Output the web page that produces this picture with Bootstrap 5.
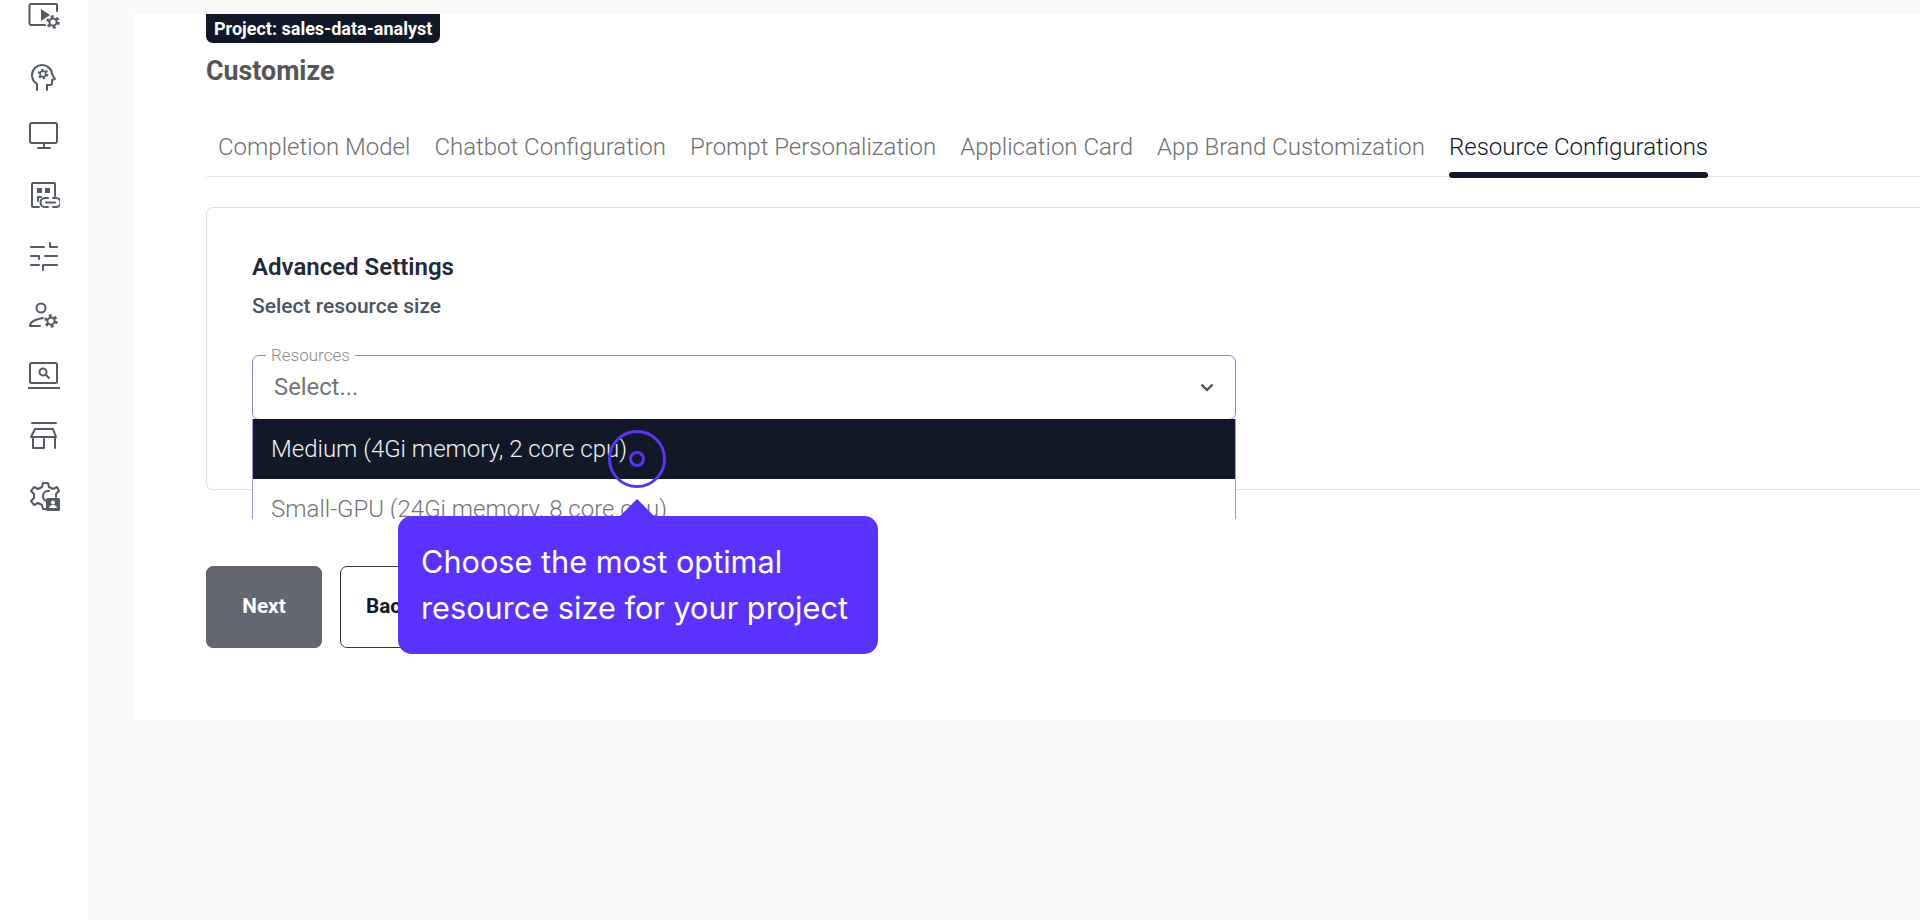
<!DOCTYPE html>
<html lang="en">

<head>
    <meta charset="UTF-8">
    <meta name="viewport" content="width=device-width, initial-scale=1.0">
    <title>Customize | Resource Configurations</title>
    <link href="https://cdn.jsdelivr.net/npm/bootstrap@5.3.0/dist/css/bootstrap.min.css" rel="stylesheet">
    <style>
        html, body { height: 100%; }
        body { background: #f9f9f9; font-family: Roboto, "Liberation Sans", sans-serif; overflow: hidden; }
        .side-rail { width: 88px; height: 920px; background: #fff; gap: 28px; }
        .side-rail svg { width: 32px; height: 32px; fill: none; stroke: #555a64; stroke-width: 2; stroke-linecap: round; stroke-linejoin: round; }
        .side-rail .solid { fill: #555a64; stroke: none; }
        .side-rail .cut { fill: #fff; stroke: none; }
        .main-area { padding: 14px 0 0 46px; }
        .main-panel { height: 706px; background: #fff; padding-left: 72px; }
        .project-tag { background: #111827; color: #fff; font-size: 18px; font-weight: 700; line-height: 29px; height: 29px; padding: 0 8px; border-radius: 0 0 7px 7px; width: 234px; white-space: nowrap; }
        .page-title { color: #555; font-size: 26.800px; font-weight: 700; line-height: 32px; margin: 12px 0 0; }
        .tab-row { margin-top: 44px; height: 46px; border-bottom: 1px solid #e5e7eb; gap: 24px; padding-left: 12px; }
        .tab-item { color: #707070; font-size: 24px; font-weight: 300; line-height: 32px; height: 46px; white-space: nowrap; position: relative; }
        .tab-item.is-on { color: #111827; }
        .tab-item.is-on::after { content: ""; position: absolute; left: 0; right: 0; bottom: -1px; height: 6px; background: #111827; border-radius: 3px; }
        .settings-box { margin-top: 30px; height: 283px; border: 1px solid #e0e0e0; border-right: 0; border-radius: 7px 0 0 7px; padding: 44px 0 0 45px; }
        .settings-title { color: #1f2937; font-size: 24px; font-weight: 600; line-height: 30px; margin: 0; }
        .settings-sub { color: #4b5563; font-size: 21px; font-weight: 500; line-height: 26px; margin: 11px 0 0; }
        .select-wrap { width: 984px; margin-top: 36px; position: relative; }
        .select-box { height: 65px; border: 1px solid #8f7fd6; border-radius: 7px; padding: 0 21px; color: #757575; font-size: 23.800px; }
        .select-label { position: absolute; left: 14px; top: -9px; background: #fff; padding: 0 5px; color: #8a8a8a; font-size: 17px; font-weight: 300; line-height: 18px; }
        .select-menu { position: absolute; top: 64px; left: 0; right: 0; height: 100px; overflow: hidden; background: #fff; border: 1px solid #a99be0; border-width: 0 1px; }
        .select-opt { height: 60px; padding: 0 18px; font-size: 24px; font-weight: 300; color: #757575; white-space: nowrap; }
        .select-opt.is-on { background: #111827; color: #f2f2f2; margin: 0 -1px; padding-left: 19px; }
        .act-btn { height: 82px; font-size: 20.700px; font-weight: 700; border-radius: 7px; }
        .btn-next { width: 116px; background: #646672; border: 1px solid #646672; color: #fff; }
        .btn-back { width: 98px; background: #fff; border: 1px solid #333a45; color: #111827; }
        .act-row { margin-top: 76px; gap: 18px; }
        .pulse-ring { position: absolute; left: 608px; top: 430px; width: 58px; height: 58px; border: 3px solid #5b34f5; border-radius: 50%; }
        .pulse-dot { position: absolute; left: 629px; top: 451px; width: 16px; height: 16px; border: 3px solid #5b34f5; border-radius: 50%; }
        .guide-tip { position: absolute; left: 398px; top: 516px; width: 480px; height: 138px; background: #5b31ff; border-radius: 14px; color: #fff; font-family: Inter, sans-serif; font-size: 30.700px; line-height: 46px; padding: 23px 0 0 23px; }
        .guide-tip::before { content: ""; position: absolute; left: 222px; top: -17px; border-left: 17px solid transparent; border-right: 17px solid transparent; border-bottom: 17px solid #5b31ff; }
    </style>
</head>

<body>
    <svg width="0" height="0" class="position-absolute">
        <defs>
            <g id="cog">
                <circle r="3.600" />
                <circle r="5.400" stroke-width="2.600" stroke-linecap="butt" stroke-dasharray="2.800 2.850" />
            </g>
        </defs>
    </svg>

    <div class="d-flex">
        <!-- Side icons -->
        <div class="side-rail d-flex flex-column align-items-center flex-shrink-0">
            <svg viewBox="0 0 32 32"><path d="M29 11V5a1 1 0 0 0-1-1H3a1.500 1.500 0 0 0-1.500 1.500v18A1.500 1.500 0 0 0 3 25h14"/><path class="solid" d="M13 9l9 6-9 6z"/><use href="#cog" x="25" y="22"/></svg>
            <svg viewBox="0 0 32 32"><path d="M9 30v-6c-3-2-5-5-5-9 0-6 5-10 10-10s10 4 10 9l3 5-3 1v3a2 2 0 0 1-2 2h-3v5"/><use href="#cog" transform="translate(15 14) scale(.8)"/></svg>
            <svg viewBox="0 0 32 32"><rect x="2" y="3" width="27" height="20" rx="2"/><path d="M16 23v5M10 28h12"/></svg>
            <svg viewBox="0 0 32 32"><path d="M11 27H5a1 1 0 0 1-1-1V4a1 1 0 0 1 1-1h21a1 1 0 0 1 1 1v12"/><path class="solid" d="M9 8h5v5H9zM17 8h5v5h-5z"/><path d="M10 17h3M10 17v4"/><path d="M20 18h-3a4.500 4.500 0 0 0 0 9h3M25 18h3a4.500 4.500 0 0 1 0 9h-3M18 22.500h9"/></svg>
            <svg viewBox="0 0 32 32"><path d="M3 7h13M22 3v4h7M3 16h8v3M17 16h12M3 25h8M15 25h14M15 25v5"/></svg>
            <svg viewBox="0 0 32 32"><circle cx="13" cy="8" r="4.500"/><path d="M15 18c-6 1-13 3-13 8h10"/><use href="#cog" x="23" y="21"/></svg>
            <svg viewBox="0 0 32 32"><rect x="2" y="3" width="27" height="20" rx="1.500"/><circle cx="15" cy="12" r="3.500"/><path d="M18 15l3 3M0 28h32"/></svg>
            <svg viewBox="0 0 32 32"><path d="M4 3h24M7 9h18l3 8H3zM5 17v11h11V19M27 17v11"/></svg>
            <svg viewBox="0 0 32 32"><path d="M18 29h-3l-1-4-4-2-4 2-3-4 3-3v-4l-3-3 3-4 4 2 4-2 1-4h5l1 4 4 2 4-2 2 4-3 3v3"/><path d="M19 21a5 5 0 1 1 2-10"/><rect class="solid" x="18" y="18" width="14" height="13" rx="1.500"/><circle class="cut" cx="25" cy="22.500" r="2"/><path class="cut" d="M21 28c0-2 2-3 4-3s4 1 4 3z"/></svg>
        </div>

        <div class="main-area flex-grow-1">
            <div class="main-panel">
                <div class="project-tag">Project: sales-data-analyst</div>
                <h1 class="page-title">Customize</h1>

                <div class="tab-row d-flex">
                    <div class="tab-item">Completion Model</div>
                    <div class="tab-item">Chatbot Configuration</div>
                    <div class="tab-item">Prompt Personalization</div>
                    <div class="tab-item">Application Card</div>
                    <div class="tab-item">App Brand Customization</div>
                    <div class="tab-item is-on">Resource Configurations</div>
                </div>

                <div class="settings-box">
                    <h2 class="settings-title">Advanced Settings</h2>
                    <p class="settings-sub">Select resource size</p>
                    <div class="select-wrap">
                        <span class="select-label">Resources</span>
                        <div class="select-box d-flex align-items-center justify-content-between">
                            <span>Select...</span>
                            <svg width="14" height="9" viewBox="0 0 14 9" fill="none" stroke="#4b5563" stroke-width="2.400"><path d="M1.500 1.500L7 7l5.500-5.500"/></svg>
                        </div>
                        <div class="select-menu">
                            <div class="select-opt is-on d-flex align-items-center">Medium (4Gi memory, 2 core cpu)</div>
                            <div class="select-opt d-flex align-items-center">Small-GPU (24Gi memory, 8 core cpu)</div>
                        </div>
                    </div>
                </div>

                <div class="act-row d-flex">
                    <button type="button" class="btn act-btn btn-next">Next</button>
                    <button type="button" class="btn act-btn btn-back">Back</button>
                </div>
            </div>
        </div>
    </div>

    <!-- Guide overlay -->
    <div class="pulse-ring"></div>
    <div class="pulse-dot"></div>
    <div class="guide-tip">Choose the most optimal<br>resource size for your project</div>

    <script src="https://cdn.jsdelivr.net/npm/bootstrap@5.3.0/dist/js/bootstrap.bundle.min.js"></script>
</body>

</html>
